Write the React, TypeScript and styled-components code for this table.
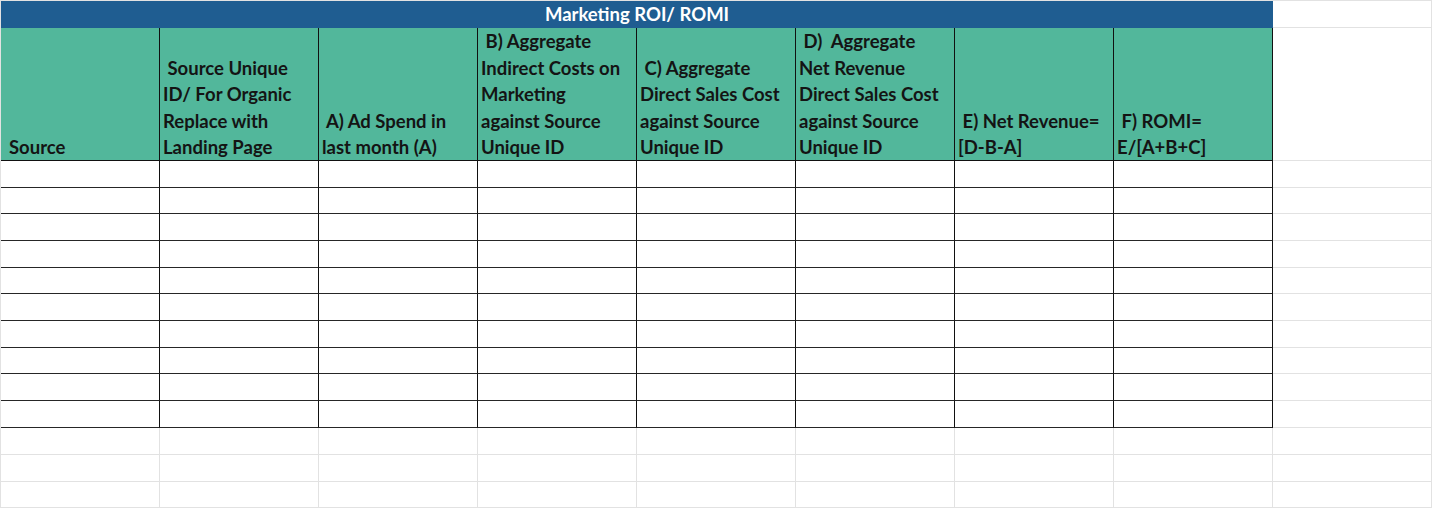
import React from "react";
import styled, { createGlobalStyle } from "styled-components";

const GlobalStyle = createGlobalStyle`
  html, body {
    margin: 0;
    padding: 0;
    background: #ffffff;
  }
  body {
    font-family: "Lato", "Liberation Sans", sans-serif;
  }
`;

const GRID = "#e2e2e2";
const INK = "#111111";

const COL_WIDTH = 159;
const DATA_ROWS = [27, 26, 27, 27, 26, 27, 27, 26, 27, 27];
const EMPTY_ROWS = [27, 27, 26];

const headers: string[][] = [
  ["Source"],
  [" Source Unique", "ID/ For Organic", "Replace with", "Landing Page"],
  [" A) Ad Spend in", "last month (A)"],
  [" B) Aggregate", "Indirect Costs on", "Marketing", "against Source", "Unique ID"],
  [" C) Aggregate", "Direct Sales Cost", "against Source", "Unique ID"],
  [" D)  Aggregate", "Net Revenue", "Direct Sales Cost", "against Source", "Unique ID"],
  [" E) Net Revenue=", "[D-B-A]"],
  [" F) ROMI=", "E/[A+B+C]"],
];

const Sheet = styled.div`
  display: grid;
  grid-template-columns: repeat(9, ${COL_WIDTH}px);
  border-top: 1px solid ${GRID};
  border-left: 1px solid ${GRID};
  width: 1432px;
  box-sizing: border-box;
`;

const TitleCell = styled.div`
  grid-column: span 8;
  height: 27px;
  background: #1f5d91;
  color: #ffffff;
  font-size: 18.5px;
  font-weight: 700;
  line-height: 27px;
  text-align: center;
`;

const Cell = styled.div<{ $tone: "grid" | "ink"; $h: number }>`
  box-sizing: border-box;
  height: ${(p) => p.$h}px;
  border-right: 1px solid ${(p) => (p.$tone === "ink" ? INK : GRID)};
  border-bottom: 1px solid ${(p) => (p.$tone === "ink" ? "#262626" : GRID)};
`;

const HeaderCell = styled.div<{ $indent: number }>`
  box-sizing: border-box;
  height: 133px;
  background: #52b79b;
  border-right: 1px solid ${INK};
  border-bottom: 1px solid ${INK};
  display: flex;
  flex-direction: column;
  justify-content: flex-end;
  padding: 0 0 0 ${(p) => p.$indent}px;
  color: #141414;
  font-size: 18.5px;
  font-weight: 700;
  line-height: 26.6px;
  white-space: pre;
  overflow: hidden;
`;

const HeaderLine = styled.span`
  display: block;
  position: relative;
  top: 1px;
`;

export default function App() {
  return (
    <>
      <GlobalStyle />
      <Sheet>
        <TitleCell>Marketing ROI/ ROMI</TitleCell>
        <Cell $tone="grid" $h={27} />

        {headers.map((lines, i) => (
          <HeaderCell key={i} $indent={i === 0 ? 8 : 3}>
            {lines.map((line, j) => (
              <HeaderLine key={j}>{line}</HeaderLine>
            ))}
          </HeaderCell>
        ))}
        <Cell $tone="grid" $h={133} />

        {DATA_ROWS.map((h, r) => (
          <React.Fragment key={`d${r}`}>
            {headers.map((_, c) => (
              <Cell key={c} $tone="ink" $h={h} />
            ))}
            <Cell $tone="grid" $h={h} />
          </React.Fragment>
        ))}

        {EMPTY_ROWS.map((h, r) => (
          <React.Fragment key={`e${r}`}>
            {Array.from({ length: 9 }).map((_, c) => (
              <Cell key={c} $tone="grid" $h={h} />
            ))}
          </React.Fragment>
        ))}
      </Sheet>
    </>
  );
}
